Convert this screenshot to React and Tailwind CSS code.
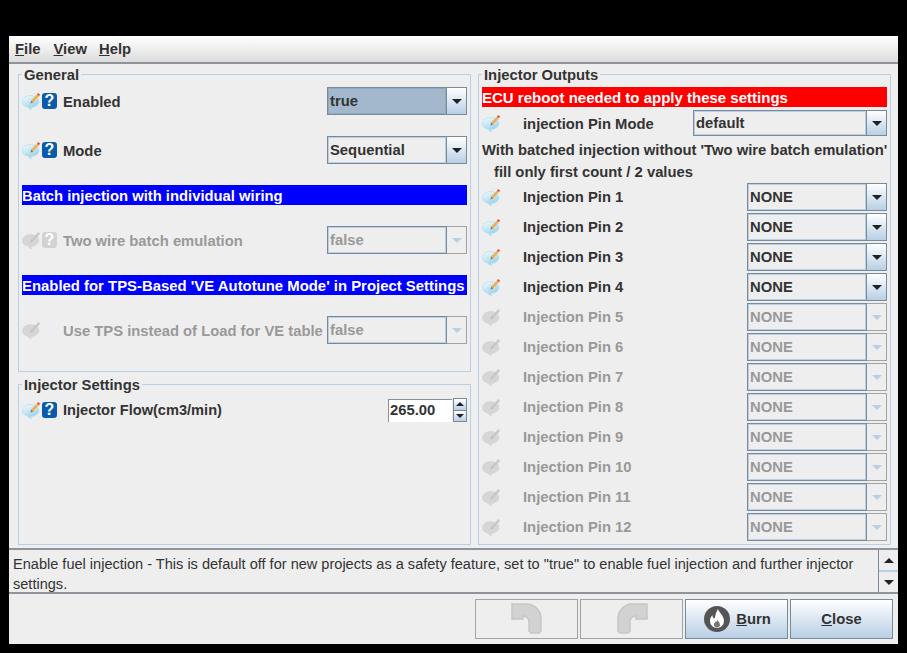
import React from "react";

const FONT = "font-['Liberation_Sans',Arial,sans-serif]";

const NoteIcon = ({ disabled }) => (
  <svg width="19" height="18" viewBox="0 0 19 18" className="shrink-0">
    <defs>
      <linearGradient id="bubble" x1="0.1" y1="0" x2="0.7" y2="1">
        <stop offset="0" stopColor="#f2fbff" />
        <stop offset="1" stopColor="#8fcde8" />
      </linearGradient>
    </defs>
    <path
      d="M8.500 3.500C4 3.500 .5 6.300 .5 9.800c0 2.700 2 4.600 5 5.300.8.900 2 2 4.300 2.700-.6-.7-.9-1.400-.9-2.300 4.500-.2 8-2.700 8-5.700 0-3.500-3.900-6.300-8.400-6.300z"
      fill={disabled ? "#d6d6d6" : "url(#bubble)"}
      stroke={disabled ? "#d6d6d6" : "#b4dff0"}
      strokeWidth="0.8"
    />
    <path d="M8.500 11.500l.8-3 5.700-6 1.800 1.700-5.700 6.200z" fill={disabled ? "#c8c8c8" : "#f2ad4e"} />
    <path d="M15 2.500l1.200-1.500 2 1.800-1.400 1.400z" fill={disabled ? "#c8c8c8" : "#e0524a"} />
    <path d="M8.500 11.500l.8-3 1.800 1.900z" fill={disabled ? "#bdbdbd" : "#8a7a68"} />
  </svg>
);

const HelpIcon = ({ disabled }) => (
  <span
    className={`flex h-[16px] w-[15px] shrink-0 items-center justify-center rounded-[3px] text-[16px] font-bold leading-none text-white ${
      disabled ? "bg-[#d2d2d2]" : "bg-[#0a5cab]"
    }`}
  >
    ?
  </span>
);

const Combo = ({ value, selected, disabled, className }) => (
  <div className={`flex ${className}`}>
    <div className="min-w-0 flex-1 border border-[#7a8a99]">
      <div
        className={`flex h-full items-center border pl-[1px] ${
          disabled ? "text-[#999999]" : "text-[#333333]"
        } ${selected ? "border-[#8fa7bf] bg-[#a3b8cc]" : "border-[#b8cfe5] bg-[#eeeeee]"}`}
      >
        {value}
      </div>
    </div>
    <div
      className={`flex w-[20px] shrink-0 items-center justify-center border border-l-0 ${
        disabled
          ? "border-[#a3a3a3] bg-[#eeeeee]"
          : "border-[#7a8a99] bg-gradient-to-b from-white to-[#b8cfe5]"
      }`}
    >
      <span
        className={`h-0 w-0 border-x-[5px] border-t-[5px] border-x-transparent ${
          disabled ? "border-t-[#b8cfe5]" : "border-t-[#222222]"
        }`}
      />
    </div>
  </div>
);

const SettingRow = ({ label, value, selected, disabled, help, combo, labelClass }) => (
  <div className={`flex h-[28px] items-center ${disabled ? "text-[#999999]" : "text-[#333333]"}`}>
    <span className="flex w-[41px] items-center gap-[1px]">
      <NoteIcon disabled={disabled} />
      {help && <HelpIcon disabled={disabled} />}
    </span>
    <span className={`flex-1 whitespace-nowrap ${labelClass}`}>{label}</span>
    <Combo value={value} selected={selected} disabled={disabled} className={combo} />
  </div>
);

const InfoBar = ({ text, red, size }) => (
  <div
    className={`h-[20px] whitespace-nowrap leading-[22px] text-white ${size} ${
      red ? "bg-[#ff0000]" : "bg-[#0000ff]"
    }`}
  >
    {text}
  </div>
);

const Group = ({ title, className, children }) => (
  <fieldset className={`min-w-0 border border-[#b8cfe5] ${className}`}>
    <legend className="px-[2px] pt-[2px] leading-[16px] text-[#333333]">{title}</legend>
    {children}
  </fieldset>
);

const FooterButton = ({ children, active }) => (
  <div
    className={`flex h-[40px] w-[103px] items-center justify-center gap-[6px] border ${
      active
        ? "border-[#7a8a99] bg-gradient-to-b from-white to-[#b8cfe5] text-[#333333]"
        : "border-[#a3a3a3]"
    }`}
  >
    {children}
  </div>
);

const pins = [1, 2, 3, 4, 5, 6, 7, 8, 9, 10, 11, 12];

export default function App() {
  return (
    <div className={`h-[653px] w-[907px] overflow-hidden bg-black pl-[9px] pt-[36px] text-[14.8px] font-bold ${FONT}`}>
      <div className="flex h-[608px] w-[889px] flex-col bg-[#eeeeee]">
        {/* menu bar */}
        <div className="flex h-[28px] shrink-0 items-center gap-[13px] border-b-2 border-[#8e9499] bg-gradient-to-b from-white to-[#dddddd] pl-[6px] text-[#333333]">
          <span><u>F</u>ile</span>
          <span><u>V</u>iew</span>
          <span className="-ml-[1px]"><u>H</u>elp</span>
        </div>

        <div className="flex h-[484px] shrink-0 gap-[7px] pl-[9px] pt-[1px]">
          <div className="flex w-[453px] flex-col gap-[3px]">
            <Group title="General" className="h-[307px] px-[3px]">
              <div className="flex flex-col gap-[21px] pt-[4px]">
                <SettingRow label="Enabled" labelClass="pt-[2px]" value="true" selected help combo="w-[140px] h-[28px]" />
                <SettingRow label="Mode" labelClass="pt-[2px]" value="Sequential" help combo="w-[140px] h-[28px]" />
                <InfoBar text="Batch injection with individual wiring" />
                <SettingRow label="Two wire batch emulation" labelClass="pt-[2px]" value="false" disabled help combo="w-[140px] h-[28px]" />
                <InfoBar size="text-[14.9px]" text="Enabled for TPS-Based 'VE Autotune Mode' in Project Settings" />
                <SettingRow label="Use TPS instead of Load for VE table" labelClass="pt-[2px]" value="false" disabled combo="w-[140px] h-[28px]" />
              </div>
            </Group>
            <Group title="Injector Settings" className="h-[170px] px-[3px]">
              <div className="mt-[5px] flex h-[24px] items-center text-[#333333]">
                <span className="flex w-[41px] items-center gap-[1px]">
                  <NoteIcon />
                  <HelpIcon />
                </span>
                <span className="flex-1 pt-[2px] text-[14.6px]">Injector Flow(cm3/min)</span>
                <div className="flex h-[23px] w-[64px] items-center border-l border-t border-[#8e8e8e] bg-white pl-[1px]">265.00</div>
                <div className="ml-[1px] flex h-[24px] w-[14px] flex-col border border-[#7a8a99]">
                  <div className="flex flex-1 items-center justify-center border-b border-[#7a8a99] bg-gradient-to-b from-white to-[#b8cfe5]">
                    <span className="h-0 w-0 border-x-[4px] border-b-[4px] border-x-transparent border-b-[#222222]" />
                  </div>
                  <div className="flex flex-1 items-center justify-center bg-gradient-to-b from-white to-[#b8cfe5]">
                    <span className="h-0 w-0 border-x-[4px] border-t-[4px] border-x-transparent border-t-[#222222]" />
                  </div>
                </div>
              </div>
            </Group>
          </div>

          <Group title="Injector Outputs" className="h-[480px] w-[413px] px-[3px]">
            <div className="pt-[4px]">
              <InfoBar red size="text-[15px]" text="ECU reboot needed to apply these settings" />
              <div className="mt-[3px] flex h-[26px] items-center text-[#333333]">
                <span className="w-[41px]"><NoteIcon /></span>
                <span className="flex-1 pt-[2px]">injection Pin Mode</span>
                <Combo value="default" className="h-[26px] w-[194px]" />
              </div>
              <div className="whitespace-nowrap pt-[3px] leading-[22px] text-[#333333]">
                <div>With batched injection without 'Two wire batch emulation'</div>
                <div className="pl-[12px]">fill only first count / 2 values</div>
              </div>
              <div className="flex flex-col gap-[2px]">
                {pins.map((n) => (
                  <SettingRow
                    key={n}
                    label={`Injection Pin ${n}`}
                    value="NONE"
                    disabled={n > 4}
                    combo="h-[28px] w-[140px]"
                  />
                ))}
              </div>
            </div>
          </Group>
        </div>

        {/* help text */}
        <div className="flex h-[46px] shrink-0 border-y-2 border-[#8e9499]">
          <div className="min-w-0 flex-1 pl-[4px] pt-[4px] text-[14.55px] font-normal leading-[20px] text-[#333333]">
            Enable fuel injection - This is default off for new projects as a safety feature, set to "true" to enable fuel injection and further injector settings.
          </div>
          <div className="flex w-[20px] shrink-0 flex-col border-l border-[#7a8a99]">
            <div className="flex flex-1 items-center justify-center border-b-2 border-[#b8cfe5]">
              <span className="h-0 w-0 border-x-[5px] border-b-[5px] border-x-transparent border-b-[#222222]" />
            </div>
            <div className="flex flex-1 items-center justify-center">
              <span className="h-0 w-0 border-x-[5px] border-t-[5px] border-x-transparent border-t-[#222222]" />
            </div>
          </div>
        </div>

        {/* footer buttons */}
        <div className="flex justify-end gap-[2px] pr-[5px] pt-[5px]">
          <FooterButton>
            <svg width="32" height="32" viewBox="0 0 32 32">
              <path
                d="M1 1h16c7 1 13 7 13 14v13l-2 2h-8l-2-2V18c0-3-3-5-6-5v3H1z"
                fill="#d2d2d2"
                stroke="#c6c6c6"
                strokeWidth="1.500"
              />
            </svg>
          </FooterButton>
          <FooterButton>
            <svg width="32" height="32" viewBox="0 0 32 32">
              <path
                d="M31 1H15C8 2 2 8 2 15v13l2 2h8l2-2V18c0-3 3-5 6-5v3h11z"
                fill="#d2d2d2"
                stroke="#c6c6c6"
                strokeWidth="1.500"
              />
            </svg>
          </FooterButton>
          <FooterButton active>
            <svg width="26" height="26" viewBox="0 0 26 26" className="ml-[2px]">
              <circle cx="13" cy="13" r="13" fill="#555555" />
              <path d="M14 3c.5 3 6 6.500 6 12a7 7 0 0 1-14 0c0-2.500 1-4.500 2.500-6 0 2 .7 3.500 2 3.500C11.500 9 12 6 14 3z" fill="#ffffff" />
              <path d="M13.500 14c.5 1.500 2.500 2.500 2.500 4.500a3 3 0 0 1-6 0c0-1.500 1-2 1.500-3 .5.500 1 .5 1 0 .3-.5.5-1 1-1.500z" fill="#777777" />
            </svg>
            <span><u>B</u>urn</span>
          </FooterButton>
          <FooterButton active>
            <span><u>C</u>lose</span>
          </FooterButton>
        </div>
      </div>
    </div>
  );
}
